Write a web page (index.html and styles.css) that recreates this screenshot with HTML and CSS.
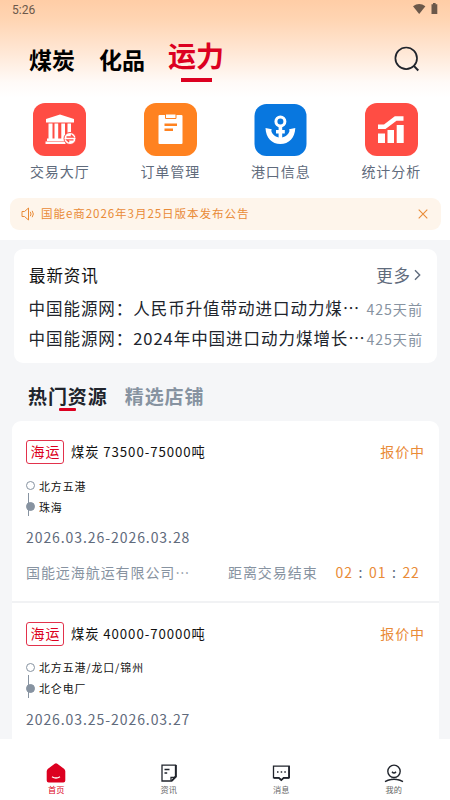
FILE: index.html
```html
<!DOCTYPE html>
<html lang="zh-CN">
<head>
<meta charset="utf-8">
<title>运力</title>
<link rel="stylesheet" href="styles.css">
</head>
<body>
<div class="app">
  <header class="hero">
    <div class="status">
      <span class="clock">5:26</span>
      <svg class="status-icons" width="25" height="12" viewBox="0 0 25 12" fill="#6b584a"><path d="M0 3.200Q6.200-1.200 12.400 3.200L6.200 11Z"/><path d="M18.500 1.200h1.500V0h2.600v1.200H24.300V11h-5.800V1.200z"/></svg>
    </div>
    <nav class="channels">
      <span class="channel">煤炭</span>
      <span class="channel">化品</span>
      <span class="channel channel-on">运力</span>
      <svg class="search" width="26" height="26" viewBox="0 0 26 26" fill="none" stroke="#20242c" stroke-width="1.700"><circle cx="12.200" cy="12.300" r="10.800"/><path d="M19.600 19.600l4.700 4.900" stroke-width="2"/></svg>
    </nav>
    <div class="shortcuts">
      <div class="shortcut">
        <svg width="53" height="53" viewBox="0 0 53 53"><rect width="53" height="53" rx="12" fill="#ff4d44"/><g fill="#fff"><path d="M13 16l14-4.500L41 16v3.500H13zM15.500 20.500h4V36h-4zM21.500 20.500h3.700V36h-3.700zM28.300 20.500H32V36h-3.700zM34.500 20.500H38V30h-3.500zM14 35.500h18V38H14zM12.500 38.500h20V41h-20z"/><circle cx="37" cy="35.500" r="6" stroke="#ff4d44" stroke-width="1"/></g><path d="M33.500 34h6.700l-2.300-2.200M40.500 36.800h-6.700l2.300 2.200" fill="none" stroke="#ff4d44" stroke-width="1.300"/></svg>
        <span>交易大厅</span>
      </div>
      <div class="shortcut">
        <svg width="53" height="53" viewBox="0 0 53 53"><rect width="53" height="53" rx="12" fill="#ff8220"/><path d="M15.500 12h22a1 1 0 0 1 1 1v27a1 1 0 0 1-1 1H15.500a1 1 0 0 1-1-1V13a1 1 0 0 1 1-1z" fill="#fff"/><path d="M21.500 11h10.500v4.500h-10.500z" fill="#fff" stroke="#ff8220" stroke-width="1"/><path d="M20.500 21.700h12.500M20.500 26.700h8.500" stroke="#ff8220" stroke-width="2.400"/></svg>
        <span>订单管理</span>
      </div>
      <div class="shortcut">
        <svg width="53" height="53" viewBox="0 0 53 53"><rect x=".5" y="1" width="52" height="52" rx="12" fill="#0877df"/><circle cx="26.400" cy="18.500" r="4.500" fill="none" stroke="#fff" stroke-width="3"/><path d="M26.400 23v15M22 28.700h8.800" stroke="#fff" stroke-width="3.600" fill="none"/><path d="M11.500 25l6.200 1.200-.4 1.800c1.300 4.200 4.600 6.300 9.100 6.800 4.500-.5 7.800-2.600 9.100-6.800l-.4-1.800 6.200-1.200c-.4 10-6.400 16-14.900 16s-14.500-6-14.900-16z" fill="#fff"/></svg>
        <span>港口信息</span>
      </div>
      <div class="shortcut">
        <svg width="53" height="53" viewBox="0 0 53 53"><rect width="53" height="53" rx="12" fill="#ff4d44"/><path d="M13 30.500h7V40h-7zM22.500 27h6.500v13h-6.500zM31.700 22h7v18h-7zM13 21.500h6L29.800 13.200H38.500v4.600h-7L20.500 26H13z" fill="#fff"/></svg>
        <span>统计分析</span>
      </div>
    </div>
    <div class="notice">
      <svg width="14" height="14" viewBox="0 0 14 14" fill="none" stroke="#e98b37" stroke-width="1"><path d="M1 4.500h2.500L7.500 1v12L3.500 9.500H1zM9.300 4.800q1.500 2.200 0 4.400M11.200 3.800q2.300 3.200 0 6.400"/></svg>
      <span class="notice-text">国能e商2026年3月25日版本发布公告</span>
      <svg class="notice-close" width="10" height="10" viewBox="0 0 10 10" fill="none" stroke="#e98b37" stroke-width="1.100"><path d="M.7.7l8.600 8.600M9.300.7L.7 9.300"/></svg>
    </div>
  </header>

  <main class="content">
    <section class="news">
      <div class="news-head">
        <h2>最新资讯</h2>
        <span class="more">更多<svg width="7" height="12" viewBox="0 0 7 12" fill="none" stroke="#5f6b7c" stroke-width="1.400"><path d="M1 1.200L5.700 6 1 10.800"/></svg></span>
      </div>
      <div class="news-row"><span class="news-title">中国能源网：人民币升值带动进口动力煤⋯</span><time>425天前</time></div>
      <div class="news-row"><span class="news-title">中国能源网：2024年中国进口动力煤增长⋯</span><time>425天前</time></div>
    </section>

    <div class="tabs"><span class="tab tab-on">热门资源</span><span class="tab">精选店铺</span></div>

    <section class="list">
      <article class="item">
        <div class="item-head"><span class="tag">海运</span><span class="item-title">煤炭 73500-75000吨</span><span class="state">报价中</span></div>
        <div class="route">
          <div class="stop"><i class="dot"></i>北方五港</div>
          <div class="stop stop-end"><i class="dot dot-full"></i>珠海</div>
        </div>
        <div class="period">2026.03.26-2026.03.28</div>
        <div class="item-foot"><span class="company">国能远海航运有限公司⋯</span><span class="until">距离交易结束</span><span class="timer"><b>02</b><i>:</i><b>01</b><i>:</i><b>22</b></span></div>
      </article>
      <article class="item">
        <div class="item-head"><span class="tag">海运</span><span class="item-title">煤炭 40000-70000吨</span><span class="state">报价中</span></div>
        <div class="route">
          <div class="stop"><i class="dot"></i>北方五港/龙口/锦州</div>
          <div class="stop stop-end"><i class="dot dot-full"></i>北仑电厂</div>
        </div>
        <div class="period">2026.03.25-2026.03.27</div>
      </article>
    </section>
  </main>

  <nav class="tabbar">
    <div class="tabbar-item tabbar-on">
      <svg width="20" height="20" viewBox="0 0 20 20"><path d="M8.700.7q1.300-1 2.600 0L18 5.700q1.300 1 1.300 2.500v9.300q0 2-2 2H2.700q-2 0-2-2V8.200q0-1.500 1.300-2.500z" fill="#dc0020"/><path d="M6 13.700q4 2.600 8 0" fill="none" stroke="#fff" stroke-width="1.300"/></svg>
      <span>首页</span>
    </div>
    <div class="tabbar-item">
      <svg width="20" height="20" viewBox="0 0 20 20" fill="none" stroke="#20242c" stroke-width="1.300"><path d="M3 2.200h13.500v11L12.500 18H3z"/><path d="M17 2v11.700L12.800 18" stroke-width="1.700"/><path d="M12 17.500v-3.200h3.500M5.500 6.500h5M5.500 10h2.700"/></svg>
      <span>资讯</span>
    </div>
    <div class="tabbar-item">
      <svg width="20" height="20" viewBox="0 0 20 20" fill="none" stroke="#20242c" stroke-width="1.300"><path d="M2.500 3.200h15.700v11.600h-5.500L10.300 17l-2.500-2.200H2.500z"/><path d="M18 3v12M3 14.900h4.800l2.500 2.200 2.400-2.200H18" stroke-width="1.600"/><path d="M6 9h1.500M9.700 9h1.500M13.300 9h1.500" stroke-width="1.500"/></svg>
      <span>消息</span>
    </div>
    <div class="tabbar-item">
      <svg width="20" height="20" viewBox="0 0 20 20" fill="none" stroke="#20242c" stroke-width="1.400"><circle cx="10" cy="8.300" r="6.200"/><path d="M8 8.700q2 2.500 4 0M1 18.700q3-1.800 6-2.200 3-.5 6 0 3 .4 6 2.200"/></svg>
      <span>我的</span>
    </div>
  </nav>
</div>
</body>
</html>
```

FILE: styles.css
```css
* { box-sizing: border-box; }

body {
  margin: 0;
  font-family: "Noto Sans CJK SC", sans-serif;
  letter-spacing: .93px;
  color: #20242c;
}

.app {
  width: 450px;
  height: 800px;
  display: flex;
  flex-direction: column;
  overflow: hidden;
  background: #f5f6f8;
}

svg { display: block; flex: none; }
i, b { font-style: normal; font-weight: 400; }
span, time, h2 { white-space: nowrap; }

.hero {
  height: 240px;
  flex: none;
  background: #fff linear-gradient(#ffcda6, #ffd5b3 20px, #ffe6d3 50px, #fffaf7 82px, #fff 98px) no-repeat;
}

.status {
  height: 20px;
  display: flex;
  justify-content: space-between;
  padding: 3px 12px 0;
}
.clock {
  font: 12px/14px Roboto, sans-serif;
  letter-spacing: 0;
  color: #6b584a;
}

.channels {
  height: 83px;
  display: flex;
  align-items: flex-start;
  padding: 0 30px 0 29px;
}
.channel {
  margin: 22px 24px 0 0;
  font-size: 23px;
  line-height: 34px;
  font-weight: 700;
  letter-spacing: 0;
  color: #000;
}
.channel-on {
  margin: 16px 0 0 -1px;
  font-size: 28px;
  line-height: 38px;
  font-weight: 700;
  color: #dc0020;
}
.channel-on::after {
  content: "";
  display: block;
  width: 31px;
  height: 4px;
  margin: 4px auto 0;
  background: #dc0020;
}
.search { margin: 26px 0 0 auto; }

.shortcuts {
  height: 95px;
  display: grid;
  grid-template-columns: repeat(4, 1fr);
  padding: 0 3.500px 0 4.500px;
}
.shortcut {
  display: flex;
  flex-direction: column;
  align-items: center;
  font-size: 14px;
  line-height: 20px;
  color: #5f6b7c;
}
.shortcut span { margin-top: 5px; }

.notice {
  height: 32px;
  display: flex;
  align-items: center;
  margin: 0 9px 0 10px;
  padding: 0 13px 0 11px;
  border-radius: 9px;
  background: #fef5eb;
  color: #e98b37;
}
.notice-text { margin: -2px 0 0 6px; font-size: 11.550px; line-height: 30px; }
.notice-close { margin-left: auto; }

.content { height: 499px; padding: 9px 0 0; overflow: hidden; }

.news {
  height: 114px;
  margin: 0 13px 0 14px;
  padding: 9px 14px 0;
  border-radius: 9px;
  background: #fff;
}
.news-head {
  height: 35px;
  display: flex;
  justify-content: space-between;
}
.news-head h2 { margin: 0 0 0 1px; font-size: 16.500px; line-height: 34px; font-weight: 400; color: #111; }
.more { display: flex; align-items: center; height: 33px; font-size: 16.500px; color: #5f6b7c; }
.more svg { margin: 1px 2px 0 3px; }
.news-row {
  height: 30px;
  display: flex;
  justify-content: space-between;
  font-size: 16.550px;
  line-height: 30px;
}
.news-title { width: 337px; margin-left: .5px; }
.news-row time { font-size: 14.150px; line-height: 33px; color: #8793a1; }

.tabs { height: 58px; display: flex; padding: 18px 0 0 28px; }
.tab {
  margin-right: 17px;
  font-size: 19px;
  line-height: 29px;
  font-weight: 700;
  color: #8793a1;
}
.tab-on { color: #20242c; }
.tab-on::after {
  content: "";
  display: block;
  width: 17px;
  height: 3px;
  margin: -2px auto 0;
  border-radius: 1px;
  background: #dc0020;
}

.list { margin: 0 11px 0 12px; border-radius: 9px 9px 0 0; background: #fff; }
.item { height: 181.500px; padding: 19px 14px 0; border-bottom: 2px solid #f1f2f4; }
.item + .item { border-bottom: 0; }
.item-head { height: 25px; display: flex; align-items: flex-start; color: #111; }
.tag {
  width: 38px;
  height: 24px;
  padding-left: 3.500px;
  border: 1px solid #e2324c;
  border-radius: 3px;
  font-size: 14px;
  line-height: 20px;
  color: #dc0020;
}
.item-title { margin-left: 7px; font-size: 13.250px; line-height: 23px; }
.state { margin-left: auto; font-size: 14px; line-height: 22px; color: #e98b37; }

.route { margin-top: 10px; }
.stop {
  position: relative;
  height: 21px;
  display: flex;
  align-items: center;
  font-size: 10.900px;
  line-height: 20px;
  color: #111;
}
.dot {
  width: 9px;
  height: 9px;
  flex: none;
  margin-right: 4px;
  border: 1px solid #8793a1;
  border-radius: 50%;
}
.dot-full { background: #8793a1; }
.stop-end::before {
  content: "";
  position: absolute;
  left: 2px;
  top: -3px;
  width: 1px;
  height: 23px;
  background: #8793a1;
}

.period { margin-top: 8px; font-size: 14px; line-height: 24px; color: #5f6b7c; }
.item-foot { display: flex; margin-top: 11px; font-size: 14px; line-height: 24px; color: #8793a1; }
.company { width: 202px; }
.timer { display: flex; margin-left: 18px; color: #e98b37; }
.timer i { width: 16px; text-align: center; color: #5f6b7c; }

.tabbar {
  height: 61px;
  flex: none;
  display: grid;
  grid-template-columns: repeat(4, 1fr);
  padding-top: 24px;
  background: #fff;
}
.tabbar-item {
  display: flex;
  flex-direction: column;
  align-items: center;
  font-size: 8.200px;
  line-height: 12px;
  letter-spacing: 0;
  color: #666;
}
.tabbar-on { color: #dc0020; }
```
